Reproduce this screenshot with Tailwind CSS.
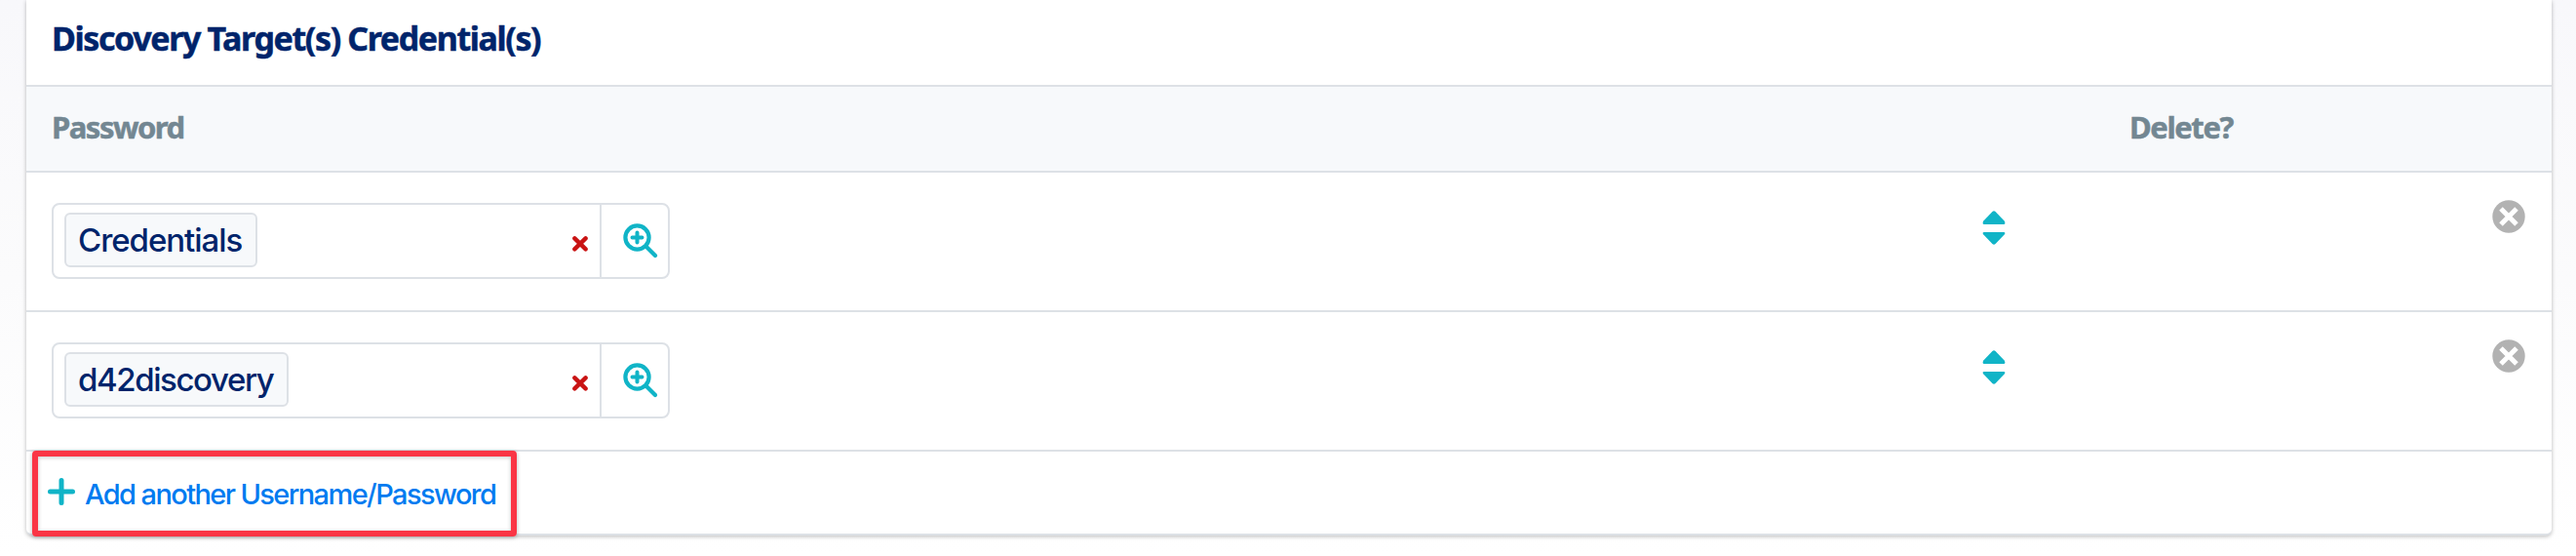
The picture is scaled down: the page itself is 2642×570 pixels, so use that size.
<!DOCTYPE html>
<html lang="en">
<head>
<meta charset="utf-8">
<title>Discovery Target(s) Credential(s)</title>
<script src="https://cdn.jsdelivr.net/npm/@tailwindcss/browser@4"></script>
</head>
<body class="h-[570px] overflow-hidden bg-linear-to-b from-[#f8f8fb] via-[#fbfbfc] to-white pr-[25px] pl-[27px]">
<svg class="hidden">
  <symbol id="zoom" viewBox="0 0 36 36"><g fill="none" stroke="#10b4c7" stroke-linecap="round"><circle cx="14.5" cy="14.5" r="12.1" stroke-width="4.2"/><path d="M9.5 14.5h10M14.5 9.5v10" stroke-width="4"/><path d="M24 24l9 9" stroke-width="4.2"/></g></symbol>
  <symbol id="clear" viewBox="0 0 16 16"><path d="M2.4 2.4l11.2 11M13.6 2.4l-11.2 11" fill="none" stroke="#c91313" stroke-width="4.4" stroke-linecap="round"/></symbol>
  <symbol id="sort" viewBox="0 0 24 36"><g fill="#10b4c7"><path d="M10.4.9Q12 -.5 13.6.9L22.7 10.6Q24.4 14 22 14H2Q-.4 14 1.3 10.6z"/><path d="M10.4 34.1Q12 35.5 13.6 34.1L22.7 24.6Q24.4 22 22 22H2Q-.4 22 1.3 24.6z"/></g></symbol>
  <symbol id="remove" viewBox="0 0 34 34"><circle cx="17" cy="17" r="16.7" fill="#b2b2b2"/><path d="M9 9l16 16M25 9l-16 16" fill="none" stroke="#fff" stroke-width="5"/></symbol>
</svg>
<main class="h-[549px] rounded-b-md border-b-2 border-[#dde1e6] bg-white shadow-[0_1px_4px_rgba(0,0,0,0.28)]">
  <h2 class="flex h-[89px] items-center border-b-2 border-[#dde1e6] pb-[9px] pl-[26px] font-['Noto_Sans',sans-serif] text-[34px] leading-none font-bold tracking-[-1.39px] text-[#00246b] [-webkit-text-stroke:0.5px]">Discovery Target(s) Credential(s)</h2>
  <div class="flex h-[88px] items-center border-b-2 border-[#dde1e6] bg-[#f7f9fb] pb-[3px] pl-[26px] font-['Noto_Sans',sans-serif] text-[31px] leading-none font-bold text-[#738792] [-webkit-text-stroke:0.5px]">
    <div class="w-[2131px] tracking-[-1.5px]">Password</div>
    <div class="tracking-[-1.4px]">Delete?</div>
  </div>
  <div class="flex h-[143px] items-start border-b-2 border-[#dde1e6] pl-[26px]">
    <div class="mt-[31px] flex h-[78px] w-[634px] rounded-lg border-2 border-[#dde1e6]">
      <div class="flex w-[562px] items-start justify-between border-r-2 border-[#dde1e6] pt-2 pr-[12px] pl-[11px]">
        <span class="flex h-14 w-[198px] items-center rounded-md border-2 border-[#dde1e6] bg-[#f7f9fb] pl-3 font-['Inter',sans-serif] text-[33px] leading-none font-medium tracking-[-1.05px] text-[#00246b]">Credentials</span>
        <svg class="mt-6 size-4"><use href="#clear"/></svg>
      </div>
      <svg class="mt-[19px] ml-[22px] size-9"><use href="#zoom"/></svg>
    </div>
    <svg class="mt-[39px] ml-[1346px] h-9 w-6"><use href="#sort"/></svg>
    <svg class="mt-[28px] ml-[499px] size-[34px]"><use href="#remove"/></svg>
  </div>
  <div class="flex h-[143px] items-start border-b-2 border-[#dde1e6] pl-[26px]">
    <div class="mt-[31px] flex h-[78px] w-[634px] rounded-lg border-2 border-[#dde1e6]">
      <div class="flex w-[562px] items-start justify-between border-r-2 border-[#dde1e6] pt-2 pr-[12px] pl-[11px]">
        <span class="flex h-14 w-[230px] items-center rounded-md border-2 border-[#dde1e6] bg-[#f7f9fb] pl-3 font-['Inter',sans-serif] text-[33px] leading-none font-medium tracking-[-1.4px] text-[#00246b]">d42discovery</span>
        <svg class="mt-6 size-4"><use href="#clear"/></svg>
      </div>
      <svg class="mt-[19px] ml-[22px] size-9"><use href="#zoom"/></svg>
    </div>
    <svg class="mt-[39px] ml-[1346px] h-9 w-6"><use href="#sort"/></svg>
    <svg class="mt-[28px] ml-[499px] size-[34px]"><use href="#remove"/></svg>
  </div>
  <div class="relative -top-px ml-[6px] flex h-[88px] w-[497px] items-center rounded-[4px] border-6 border-[#fa3545] pl-[10px] shadow-[0_1px_4px_rgba(0,0,0,0.3),inset_0_1px_4px_rgba(0,0,0,0.22)]">
    <svg class="-mt-1 size-7" viewBox="0 0 28 28"><path d="M2.5 14h23M14 2.5v23" stroke="#10b4c7" stroke-width="5" stroke-linecap="round"/></svg>
    <a class="ml-[10px] font-['Inter',sans-serif] text-[29px] leading-none font-medium tracking-[-1.6px] whitespace-nowrap text-[#007bf0]">Add another Username/Password</a>
  </div>
</main>
</body>
</html>
